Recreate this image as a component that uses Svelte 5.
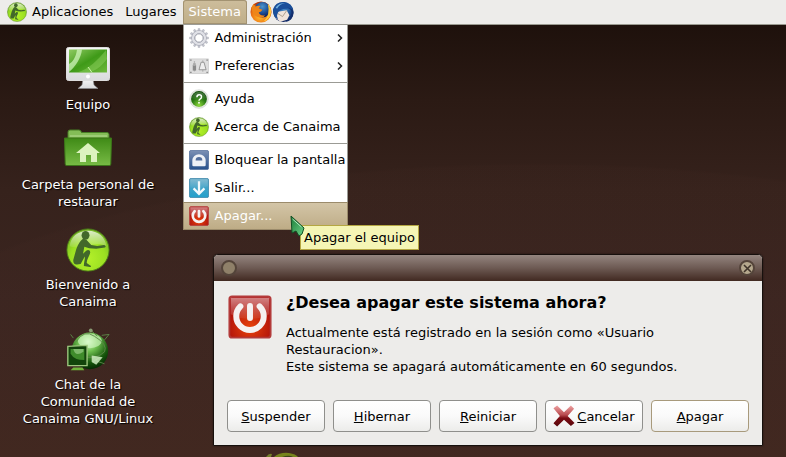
<script>
  const menu = [
    [
      { icon: 'gear', label: 'Administración', sub: true },
      { icon: 'prefs', label: 'Preferencias', sub: true }
    ],
    [
      { icon: 'help', label: 'Ayuda' },
      { icon: 'canaima', label: 'Acerca de Canaima' }
    ],
    [
      { icon: 'lock', label: 'Bloquear la pantalla' },
      { icon: 'exit', label: 'Salir...' },
      { icon: 'power', label: 'Apagar...', active: true }
    ]
  ];
  const shortcuts = [
    { icon: 'computer', size: 48, label: 'Equipo' },
    { icon: 'home', size: 48, label: 'Carpeta personal de restaurar' },
    { icon: 'canaima', size: 44, label: 'Bienvenido a Canaima' },
    { icon: 'chat', size: 44, label: 'Chat de la Comunidad de Canaima GNU/Linux' }
  ];
  const actions = [
    { key: 'S', rest: 'uspender' },
    { key: 'H', rest: 'ibernar' },
    { key: 'R', rest: 'einiciar' },
    { key: 'C', rest: 'ancelar', cross: true },
    { key: 'A', rest: 'pagar', primary: true }
  ];
  const teeth = Array.from({ length: 12 }, (_, i) => i * 30);
</script>

<svg class="defs" aria-hidden="true">
  <defs>
    <radialGradient id="lime" cx="50%" cy="70%" r="75%">
      <stop offset="0" stop-color="#b4f02a" /><stop offset=".55" stop-color="#9be022" /><stop offset="1" stop-color="#6aa828" />
    </radialGradient>
    <linearGradient id="gloss" x1="0" y1="0" x2="0" y2="1">
      <stop offset="0" stop-color="#fff" stop-opacity=".75" /><stop offset="1" stop-color="#fff" stop-opacity=".1" />
    </linearGradient>
    <linearGradient id="screen" x1="0" y1="0" x2="1" y2="1">
      <stop offset="0" stop-color="#8fca62" /><stop offset=".5" stop-color="#3f9a18" /><stop offset="1" stop-color="#6fb93c" />
    </linearGradient>
    <linearGradient id="silver" x1="0" y1="0" x2="0" y2="1">
      <stop offset="0" stop-color="#f6f6f6" /><stop offset="1" stop-color="#dadbdd" />
    </linearGradient>
    <linearGradient id="folder" x1="0" y1="0" x2="0" y2="1">
      <stop offset="0" stop-color="#3f8a16" /><stop offset="1" stop-color="#78bb45" />
    </linearGradient>
    <radialGradient id="globe" cx="45%" cy="25%" r="75%">
      <stop offset="0" stop-color="#e4ffd8" /><stop offset=".35" stop-color="#6fc050" /><stop offset=".75" stop-color="#17580c" /><stop offset="1" stop-color="#062b04" />
    </radialGradient>
    <radialGradient id="red" cx="50%" cy="75%" r="65%">
      <stop offset="0" stop-color="#e8430c" /><stop offset="1" stop-color="#a80b0b" />
    </radialGradient>
    <linearGradient id="blue" x1="0" y1="0" x2="0" y2="1">
      <stop offset="0" stop-color="#5ea6c4" /><stop offset="1" stop-color="#22a0cc" />
    </linearGradient>
    <linearGradient id="navy" x1="0" y1="0" x2="0" y2="1">
      <stop offset="0" stop-color="#7c90b4" /><stop offset="1" stop-color="#27518c" />
    </linearGradient>
    <radialGradient id="green" cx="50%" cy="90%" r="75%">
      <stop offset="0" stop-color="#8ed93c" /><stop offset=".6" stop-color="#2c7d14" /><stop offset="1" stop-color="#0f4f07" />
    </radialGradient>
    <linearGradient id="cross" x1="0" y1="0" x2="0" y2="1">
      <stop offset="0" stop-color="#efa3a3" /><stop offset=".45" stop-color="#b84a4e" /><stop offset=".6" stop-color="#7c0d14" /><stop offset="1" stop-color="#56060b" />
    </linearGradient>
    <radialGradient id="fox" cx="45%" cy="70%" r="65%">
      <stop offset="0" stop-color="#ffc02c" /><stop offset=".6" stop-color="#ee7414" /><stop offset="1" stop-color="#b93508" />
    </radialGradient>
    <radialGradient id="ocean" cx="50%" cy="30%" r="65%">
      <stop offset="0" stop-color="#4b93cc" /><stop offset=".6" stop-color="#1d5098" /><stop offset="1" stop-color="#0e2460" />
    </radialGradient>
    <linearGradient id="pointer" x1="0" y1="0" x2="1" y2="1">
      <stop offset="0" stop-color="#197a35" /><stop offset="1" stop-color="#6dd58a" />
    </linearGradient>
  </defs>
</svg>

{#snippet icon(name, size)}
  <svg width={size} height={size} viewBox="0 0 48 48" aria-hidden="true">
    {#if name === 'canaima'}
      <circle cx="24" cy="24" r="23" fill="url(#lime)" stroke="#4b7c18" />
      <path d="M4 20C5 10 13 3 24 3s19 7 20 17C34 13 15 24 4 20z" fill="url(#gloss)" />
      <ellipse cx="21.300" cy="8" rx="4.300" ry="4.800" fill="#42682a" />
      <path d="M19 11.500C15 14 12 20 10.400 26L8 34.500C7.500 38 9 40 12 39.800L16 39.300 20.500 31C21 34 19.500 37 19.500 41.500L26 42.600C28 42.500 27.500 41 26 40.600L22.600 38.300C22.500 34 26.500 29 26.400 26.500 26.300 24 24 23.500 22 24.800L18.600 28 20 20.500 25.400 22 33 22.600 42.500 21.400C44 20.500 43 18.500 41.500 18.500L34 19.600 27.500 18.500 22.500 13z" fill="#42682a" />
    {:else if name === 'computer'}
      <path d="M19 35h10l1 6 4 3.500H14l4-3.500z" fill="url(#silver)" stroke="#8c8d90" stroke-width=".6" />
      <rect x="2.500" y="3.500" width="43" height="33" rx="2" fill="url(#silver)" stroke="#ddd" />
      <rect x="5" y="5.500" width="38" height="23" fill="url(#screen)" />
      <path d="M5 28C12 22 17 14 18 5.500h-5C12 13 9 18 5 20z" fill="#e0ffd0" opacity=".65" />
      <path d="M13 28.500C25 25 34 16 42 6l1 9c-6 8-12 12-19 13.500z" fill="#9ada6c" opacity=".4" />
      <path d="M24 23l4 5.500" stroke="#cff5ac" />
      <circle cx="24" cy="32.500" r="2" fill="#fff" />
    {:else if name === 'home'}
      <path d="M4 16V8q0-2 2-2h9q2 0 2.500 2.500H43q2 0 2 2V17H4z" fill="#84bd57" stroke="#477f25" />
      <path d="M6 12h37" stroke="#a6d27f" stroke-width="1.500" />
      <path d="M0.500 14h47l-.7 26q0 1.500-1.500 1.500H2.700q-1.500 0-1.500-1.500z" fill="url(#folder)" stroke="#3c7519" />
      <path d="M24 19L12 29h4v9h6v-7h5v7h6v-9h3z" fill="#dcf3bf" />
    {:else if name === 'chat'}
      <circle cx="26" cy="25" r="20" fill="url(#globe)" />
      <ellipse cx="26" cy="14" rx="13" ry="8" fill="#d2f8c3" opacity=".65" />
      <path d="M11 15q9-14 20-6 15 9 11 17-9 9-25 5M27 2l7 7M8 11l-3-4M39 8l8-1-5 6M33 36l9 3M29 37l8-5" fill="none" stroke="#5c8848" />
      <path d="M28 30l12 2-7 8-5-3z" fill="#d9f5cc" opacity=".8" />
      <circle cx="27" cy="2.500" r="2" fill="#899b74" />
      <path d="M2 20l21-1v22H2z" fill="#12450b" stroke="#9dc77e" stroke-width="1.500" />
      <path d="M5 23h15v12q-11 0-15-7z" fill="#3f8b2b" />
      <path d="M8 23q2 9 11 3v-3z" fill="#a7d795" opacity=".6" />
      <path d="M5 46l3-3h10l2 3z" fill="#6fb43b" />
    {:else if name === 'gear'}
      {#each teeth as a}
        <path d="M21 8l1-7h4l1 7z" transform="rotate({a} 24 24)" fill="#c5c7d0" stroke="#9a9ca8" stroke-width=".8" />
      {/each}
      <circle cx="24" cy="24" r="14" fill="none" stroke="#a6a8b4" stroke-width="9" />
      <circle cx="24" cy="24" r="14" fill="none" stroke="#dfe0e6" stroke-width="6.500" />
      <circle cx="24" cy="24" r="10" fill="#fff" stroke="#8e909e" stroke-width="2" />
    {:else if name === 'prefs'}
      <rect x="1" y="7" width="46" height="35" fill="#dedede" stroke="#c4c4c4" stroke-width="1.500" />
      <path d="M13 12v25M33 10v28" stroke="#b8b8b8" stroke-width="3" />
      <rect x="9" y="21" width="8" height="14" fill="#8a8a8a" /><rect x="10" y="17" width="6" height="7" fill="#aaa" />
      <path d="M29 15h7l5 18H24z" fill="#eee" stroke="#888" stroke-width="2" />
      <path d="M3 10h3M3 39h3M42 10h3M42 39h3" stroke="#777" stroke-width="3" />
    {:else if name === 'help'}
      <circle cx="24" cy="24" r="22.500" fill="#e4e7e1" stroke="#c3c8c0" />
      <circle cx="24" cy="24" r="19" fill="url(#green)" />
      <path d="M7 22a17 15 0 0 1 34 0q-17 7-34 0z" fill="url(#gloss)" opacity=".35" />
      <path d="M19 20q0-6 5.500-6t5.500 5c0 5-6 5-6 9" fill="none" stroke="#fff" stroke-width="3.500" />
      <circle cx="24" cy="33" r="2.200" fill="#fff" />
    {:else if name === 'lock'}
      <rect x="1" y="1" width="46" height="46" rx="4" fill="url(#navy)" stroke="#55719c" stroke-width="2" />
      <path d="M8 36V24a16 14 0 0 1 32 0v12q0 3-3 3H11q-3 0-3-3z" fill="#eef1f6" />
      <path d="M16 25a8 8 0 0 1 16 0z" fill="#526e9c" />
    {:else if name === 'exit'}
      <rect x="1" y="1" width="46" height="46" rx="4" fill="url(#blue)" stroke="#3c86a8" stroke-width="2" />
      <path d="M3 3h42v17q-22 10-42 3z" fill="url(#gloss)" opacity=".3" />
      <path d="M24 8v30M11 25l13 13 13-13" fill="none" stroke="#f2f9fc" stroke-width="5.500" />
    {:else if name === 'power'}
      <rect x="1.500" y="1.500" width="45" height="45" rx="3" fill="url(#red)" stroke="#b33a3a" stroke-width="2" />
      <path d="M3 3h42v18q-8 5-21 5T3 21z" fill="url(#gloss)" opacity=".65" />
      <path d="M13.500 12.500a15 15 0 1 0 21 0" fill="none" stroke="#f5f1f1" stroke-width="6.500" stroke-linecap="round" />
      <path d="M24 12v13" stroke="#f5f1f1" stroke-width="6.500" stroke-linecap="round" />
    {:else if name === 'cross'}
      <path d="M1 7l8-6 15 15L39 1l7 7-14 16 15 15-8 7-15-14L9 47l-8-7 14-16z" fill="url(#cross)" />
    {:else if name === 'firefox'}
      <circle cx="24" cy="24" r="23" fill="url(#fox)" />
      <circle cx="27" cy="19" r="17" fill="url(#ocean)" />
      <path d="M3 14l5-8 4 6q6-3 11-1l-4 5 8 3q-2 5-8 6 3 8 14 6-5 9-16 4Q4 30 3 14z" fill="#ee8519" />
      <path d="M39 6q8 8 7 19-2 16-17 20 16-13 10-39z" fill="#ffc63a" />
    {:else if name === 'thunderbird'}
      <circle cx="25" cy="24" r="22" fill="url(#ocean)" />
      <path d="M9 24l23-4 6 11-5 10-15 4-10-8z" fill="#efe3da" />
      <path d="M9 25l14 9 9-13" fill="none" stroke="#a99a88" stroke-width="2" />
      <path d="M2 18Q8 1 27 2q15 2 19 19-7-6-14-4-16 0-20 10-3 6 1 13-12-6-11-22z" fill="#1b4f9a" />
      <path d="M8 14Q16 3 29 5q-12 1-18 12z" fill="#6fb2e0" />
      <path d="M33 14q14 4 8 18-3 9-12 14 17-3 18-20 0-10-14-12z" fill="#14306e" />
    {/if}
  </svg>
{/snippet}

<div class="desktop">
  <nav class="panel" aria-label="Panel">
    <button class="top">{@render icon('canaima', 20)}Aplicaciones</button>
    <button class="top">Lugares</button>
    <div class="holder">
      <button class="top open" aria-expanded="true">Sistema</button>
      <div class="menu">
        {#each menu as group}
          <div class="group">
            {#each group as item}
              <button class="item" class:active={item.active}>
                {@render icon(item.icon, 20)}
                <span>{item.label}</span>
                {#if item.sub}
                  <svg class="arrow" width="6" height="8" viewBox="0 0 6 8" aria-hidden="true"><path d="M1 .5L4.500 4 1 7.500" fill="none" stroke="#222" stroke-width="1.500" /></svg>
                {/if}
              </button>
            {/each}
          </div>
        {/each}
      </div>
    </div>
    <div class="launchers">
      <button class="launcher" aria-label="Firefox">{@render icon('firefox', 22)}</button>
      <button class="launcher" aria-label="Thunderbird">{@render icon('thunderbird', 22)}</button>
    </div>
  </nav>

  <main class="shortcuts">
    {#each shortcuts as s}
      <a class="shortcut" href="#{s.icon}">
        <span class="picture">{@render icon(s.icon, s.size)}</span>
        <span>{s.label}</span>
      </a>
    {/each}
  </main>

  <svg class="emblem" width="40" height="5" viewBox="0 0 40 5" aria-hidden="true">
    <path d="M2 5q3-4 6-3l-1 3z" fill="#75802a" /><path d="M10 5Q16 0 25 1q7 1 9 4z" fill="#77841c" /><path d="M18 5q5-2 9-1l2 1z" fill="#3d441b" />
  </svg>

  <div class="window" role="dialog" aria-labelledby="question">
    <header class="titlebar">
      <button class="knob" aria-label="Menú de la ventana"></button>
      <button class="knob close" aria-label="Cerrar">
        <svg width="9" height="9" viewBox="0 0 9 9" aria-hidden="true"><path d="M1 1l7 7M8 1L1 8" stroke="#40342a" stroke-width="1.600" /></svg>
      </button>
    </header>
    <div class="body">
      {@render icon('power', 44)}
      <div class="message">
        <h1 id="question">¿Desea apagar este sistema ahora?</h1>
        <p>Actualmente está registrado en la sesión como «Usuario Restauracion».<br />Este sistema se apagará automáticamente en 60 segundos.</p>
      </div>
    </div>
    <footer class="actions">
      {#each actions as a}
        <button class="action" class:primary={a.primary}>
          {#if a.cross}{@render icon('cross', 22)}{/if}<span><u>{a.key}</u>{a.rest}</span>
        </button>
      {/each}
    </footer>
  </div>

  <div class="tooltip" role="tooltip">Apagar el equipo</div>
  <svg class="cursor" width="16" height="23" viewBox="0 0 16 23" aria-hidden="true">
    <path d="M1 1l1 17 4-2 3 5 3-2 2-6z" fill="url(#pointer)" stroke="#124f24" />
    <path d="M2.500 4l9 8" stroke="#b7efc4" />
  </svg>
</div>

<style>
  :global(body) {
    margin: 0;
  }
  .defs {
    position: absolute;
    width: 0;
    height: 0;
  }
  .desktop {
    position: relative;
    min-height: 100vh;
    overflow: hidden;
    background:
      radial-gradient(ellipse 760px 300px at 68% 463px, #5a38300f 99%, transparent 100%),
      linear-gradient(#1e110c 25px, #2b1a14 100px, #36221c 190px, #3b2520 300px, #40271f 457px);
    font: 13px/17px "DejaVu Sans", sans-serif;
    color: #000;
  }
  button {
    margin: 0;
    padding: 0;
    border: 0;
    background: none;
    font: inherit;
    color: inherit;
  }
  svg {
    flex: none;
    display: block;
  }
  .panel {
    display: flex;
    height: 24px;
    padding-left: 1px;
    background: #edecea;
    border-bottom: 1px solid #9a9a90;
  }
  .top {
    display: flex;
    align-items: center;
    gap: 5px;
    height: 24px;
    padding: 0 6px 1px;
  }
  .open {
    color: #fff;
    background: linear-gradient(#cdbd9c, #bfae88);
    box-shadow: inset 0 0 0 1px #a39372;
    border-radius: 3px 3px 0 0;
  }
  .holder {
    position: relative;
  }
  .menu {
    position: absolute;
    z-index: 2;
    top: 24px;
    left: 0;
    min-width: 164px;
    background: #fff;
    box-shadow: inset 0 0 0 1px #9b9b95;
    white-space: nowrap;
  }
  .group + .group {
    padding-top: 5px;
    background: linear-gradient(#9b9b95, #9b9b95) 0 2px / 100% 1px no-repeat;
  }
  .item {
    display: flex;
    align-items: center;
    gap: 6px;
    width: 100%;
    height: 28px;
    padding: 0 3px 1px 6px;
    text-align: left;
  }
  .arrow {
    margin: 0 2px 0 auto;
  }
  .active {
    color: #fff;
    background: linear-gradient(#d4c6a8, #bdab85);
    box-shadow: inset 0 0 0 1px #9b8b6b;
  }
  .launchers {
    display: flex;
    padding-left: 3px;
  }
  .launcher {
    display: grid;
    place-items: center;
    width: 22px;
    height: 24px;
  }
  .shortcuts {
    display: grid;
    grid-template-rows: 80px 100px 100px auto;
    width: 136px;
    padding: 19px 20px 0;
  }
  .shortcut {
    display: flex;
    flex-direction: column;
    align-items: center;
    gap: 4px;
    color: #fff;
    text-align: center;
    text-decoration: none;
    text-shadow: 1px 1px 1px #000;
  }
  .picture {
    display: flex;
    align-items: flex-end;
    height: 48px;
  }
  .emblem {
    position: absolute;
    left: 264px;
    bottom: 0;
  }
  .window {
    position: absolute;
    left: 213px;
    top: 254px;
    width: 548px;
    border: 1px solid #17100d;
    border-radius: 5px 5px 0 0;
    background: #edecea;
    box-shadow: 0 0 2px #0008;
    overflow: hidden;
  }
  .titlebar {
    display: flex;
    align-items: center;
    justify-content: space-between;
    height: 26px;
    padding: 0 7px;
    background: linear-gradient(#94857f, #6d5a53 50%, #412921);
  }
  .knob {
    display: grid;
    place-items: center;
    width: 16px;
    height: 16px;
    border: 2px solid #54443a;
    border-radius: 50%;
    background: #8f8069;
  }
  .close {
    background: #b5a88d;
  }
  .body {
    display: flex;
    gap: 14px;
    padding: 14px 14px 0;
  }
  h1 {
    margin: 0;
    font-size: 16px;
    line-height: 16px;
  }
  p {
    max-width: 400px;
    margin: 13px 0 0;
  }
  .actions {
    display: flex;
    gap: 8px;
    padding: 25px 13px 13px;
  }
  .action {
    display: flex;
    flex: 1 1 0;
    align-items: center;
    justify-content: center;
    gap: 2px;
    height: 32px;
    border: 1px solid #8f8f8c;
    border-radius: 4px;
    background: linear-gradient(#fff, #fafafa 50%, #ececea);
  }
  .primary {
    border-color: #a89a7c;
  }
  .tooltip {
    position: absolute;
    z-index: 3;
    left: 300px;
    top: 225px;
    padding: 3px;
    border: 1px solid #b5a742;
    background: #f5f5b5;
  }
  .cursor {
    position: absolute;
    z-index: 4;
    left: 290px;
    top: 215px;
  }
</style>
